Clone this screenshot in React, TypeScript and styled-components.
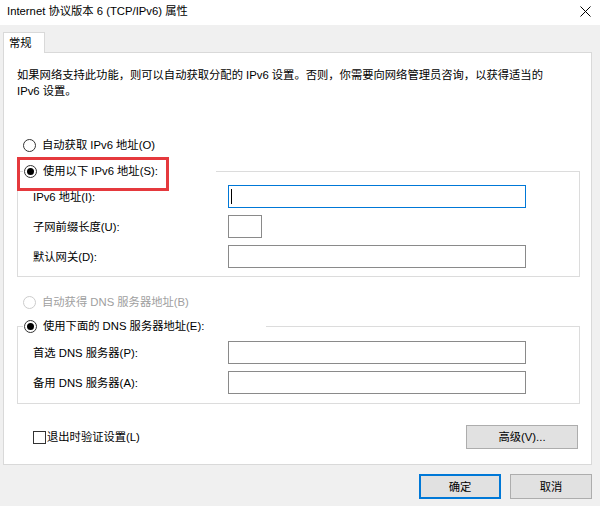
import * as React from 'react';
import styled, { createGlobalStyle } from 'styled-components';

const GlobalStyle = createGlobalStyle`
  html, body { margin: 0; padding: 0; }
  body {
    background: #f0f0f0;
    font-family: "Liberation Sans", "Noto Sans CJK SC", sans-serif;
    font-size: 11.3px;
    color: #000;
  }
  * { box-sizing: border-box; }
`;

const Window = styled.div`
  width: 600px;
  height: 506px;
  display: flex;
  flex-direction: column;
  background: #f0f0f0;
  overflow: hidden;
`;

const TitleBar = styled.div`
  height: 25px;
  flex: none;
  background: #fff;
  display: flex;
  align-items: center;
  justify-content: space-between;
  padding: 0 9px 3px 7px;
  line-height: 16px;
`;

const Body = styled.div`
  padding: 7px 8px 0 3px;
  display: flex;
  flex-direction: column;
`;

const Tab = styled.div`
  position: relative;
  z-index: 1;
  width: 42px;
  height: 21px;
  margin-bottom: -1px;
  padding: 2px 0 0 5px;
  background: #fff;
  border: 1px solid #d9d9d9;
  border-bottom: none;
  line-height: 16px;
`;

const Panel = styled.div`
  width: 589px;
  background: #fff;
  border: 1px solid #d9d9d9;
  padding: 14px 11px 15px 13px;
  display: flex;
  flex-direction: column;
  line-height: 16px;
`;

const Desc = styled.p`
  margin: 0;
  line-height: 16px;
`;

const RadioRow = styled.label<{ $disabled?: boolean; $top?: number; $inset?: number }>`
  display: flex;
  align-items: center;
  gap: 6px;
  height: 16px;
  padding-left: ${(p) => p.$inset ?? 6}px;
  margin-top: ${(p) => p.$top ?? 0}px;
  color: ${(p) => (p.$disabled ? '#a0a0a0' : '#000')};
  white-space: nowrap;
`;

const RadioDot = styled.span<{ $checked?: boolean; $disabled?: boolean }>`
  width: 13px;
  height: 13px;
  flex: none;
  border-radius: 50%;
  border: 1px solid ${(p) => (p.$disabled ? '#cccccc' : '#333')};
  display: flex;
  align-items: center;
  justify-content: center;
  &::after {
    content: '';
    width: 7px;
    height: 7px;
    border-radius: 50%;
    background: ${(p) => (p.$checked ? '#000' : 'transparent')};
  }
`;

const Group = styled.fieldset<{ $top: number; $padTop: number; $padBottom: number }>`
  margin: ${(p) => p.$top}px 0 0 0;
  width: 563px;
  border: 1px solid #dcdcdc;
  padding: ${(p) => p.$padTop}px 0 ${(p) => p.$padBottom}px 0;
  min-width: 0;
`;

const Legend = styled.legend<{ $w: number }>`
  padding: 0;
  margin-left: 5px;
  width: ${(p) => p.$w}px;
`;

const Highlight = styled.span`
  position: relative;
  display: block;
  &::after {
    content: '';
    position: absolute;
    left: -6px;
    top: -6px;
    width: 146px;
    height: 28px;
    border: 3px solid #e5393d;
    pointer-events: none;
  }
`;

const Fields = styled.div`
  display: grid;
  grid-template-columns: 195px auto;
  row-gap: 7px;
  align-items: center;
  margin-left: 15px;
`;

const TextBox = styled.div<{ $w: number; $focused?: boolean }>`
  width: ${(p) => p.$w}px;
  height: 23px;
  border: 1px solid ${(p) => (p.$focused ? '#0078d7' : '#8a8a8a')};
  background: #fff;
  display: flex;
  align-items: center;
  padding-left: 2px;
`;

const Caret = styled.span`
  width: 1px;
  height: 15px;
  background: #000;
`;

const Footer = styled.div`
  margin-top: 21px;
  height: 24px;
  display: flex;
  align-items: center;
  justify-content: space-between;
  padding: 0 2px 0 16px;
`;

const CheckRow = styled.label`
  display: flex;
  align-items: center;
  gap: 1px;
`;

const CheckBox = styled.span`
  width: 13px;
  height: 13px;
  border: 1px solid #333;
  background: #fff;
`;

const Button = styled.button<{ $w: number; $h: number; $default?: boolean }>`
  width: ${(p) => p.$w}px;
  height: ${(p) => p.$h}px;
  font: inherit;
  color: #000;
  background: #e1e1e1;
  border: ${(p) => (p.$default ? '2px solid #0078d7' : '1px solid #adadad')};
  padding: 0;
  line-height: 16px;
`;

const ButtonRow = styled.div`
  margin-top: 9px;
  display: flex;
  justify-content: flex-end;
  gap: 9px;
`;

const CloseIcon = () => (
  <svg width="11" height="11" viewBox="0 0 11 11">
    <path d="M0.5 0.5 L10.5 10.5 M10.5 0.5 L0.5 10.5" stroke="#000" strokeWidth="1" />
  </svg>
);

export default function App() {
  return (
    <Window>
      <GlobalStyle />
      <TitleBar>
        <span>Internet 协议版本 6 (TCP/IPv6) 属性</span>
        <CloseIcon />
      </TitleBar>
      <Body>
        <Tab>常规</Tab>
        <Panel>
          <Desc>
            如果网络支持此功能，则可以自动获取分配的 IPv6 设置。否则，你需要向网络管理员咨询，以获得适当的
            <br />
            IPv6 设置。
          </Desc>
          <RadioRow $top={38}>
            <RadioDot />
            自动获取 IPv6 地址(O)
          </RadioRow>
          <Group $top={10} $padTop={6} $padBottom={8}>
            <Legend $w={193}>
              <Highlight>
                <RadioRow $inset={1}>
                  <RadioDot $checked />
                  使用以下 IPv6 地址(S):
                </RadioRow>
              </Highlight>
            </Legend>
            <Fields>
              <span>IPv6 地址(I):</span>
              <TextBox $w={298} $focused>
                <Caret />
              </TextBox>
              <span>子网前缀长度(U):</span>
              <TextBox $w={34} />
              <span>默认网关(D):</span>
              <TextBox $w={298} />
            </Fields>
          </Group>
          <RadioRow $top={17} $disabled>
            <RadioDot $disabled />
            自动获得 DNS 服务器地址(B)
          </RadioRow>
          <Group $top={8} $padTop={7} $padBottom={9}>
            <Legend $w={243}>
              <RadioRow $inset={1}>
                <RadioDot $checked />
                使用下面的 DNS 服务器地址(E):
              </RadioRow>
            </Legend>
            <Fields>
              <span>首选 DNS 服务器(P):</span>
              <TextBox $w={298} />
              <span>备用 DNS 服务器(A):</span>
              <TextBox $w={298} />
            </Fields>
          </Group>
          <Footer>
            <CheckRow>
              <CheckBox />
              退出时验证设置(L)
            </CheckRow>
            <Button $w={112} $h={24}>高级(V)...</Button>
          </Footer>
        </Panel>
        <ButtonRow>
          <Button $w={82} $h={25} $default>确定</Button>
          <Button $w={82} $h={25}>取消</Button>
        </ButtonRow>
      </Body>
    </Window>
  );
}
